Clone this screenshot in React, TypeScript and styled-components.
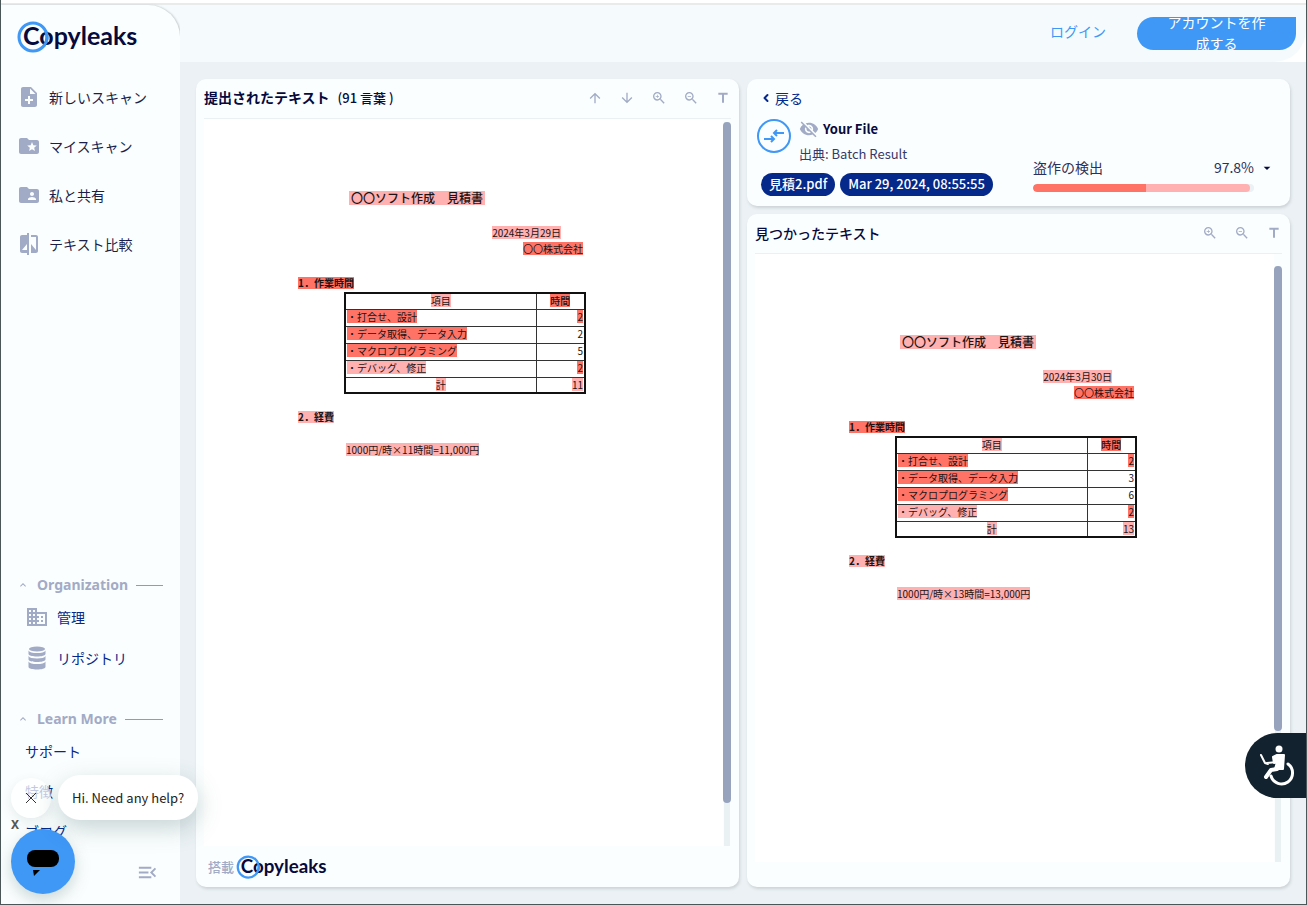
import React from 'react';
import styled, { createGlobalStyle } from 'styled-components';
import {
  MdNoteAdd,
  MdFolderSpecial,
  MdFolderShared,
  MdCompare,
  MdArrowUpward,
  MdArrowDownward,
  MdZoomIn,
  MdZoomOut,
  MdTitle,
  MdOutlineBusiness,
  MdMenuOpen,
  MdVisibilityOff,
  MdKeyboardArrowUp,
  MdArrowDropDown,
} from 'react-icons/md';
import { ChevronLeft } from 'lucide-react';

const color = {
  page: '#ebf1f4',
  panel: '#fbfefe',
  header: '#f5fbfc',
  line: '#e9f1f3',
  icon: '#a2abc6',
  ink: '#1b1f4a',
  title: '#060a3c',
  navy: '#04298a',
  blue: '#3f97f6',
  strong: '#ff7366',
  soft: '#ffb0b0',
};

const Global = createGlobalStyle`
  * { box-sizing: border-box; }
  body {
    margin: 0;
    background: ${color.page};
    color: ${color.ink};
    font: 14px/20px "Noto Sans CJK JP", "Noto Sans", sans-serif;
  }
  button { font: inherit; color: inherit; background: none; border: 0; padding: 0; cursor: pointer; }
  a { color: inherit; text-decoration: none; }
  h1, h2, h3, p { margin: 0; padding: 0; font-size: inherit; }
`;

const Frame = styled.div`
  position: relative;
  display: flex;
  flex-direction: column;
  min-height: 100vh;
  overflow: hidden;
  border: solid #4b5659;
  border-width: 0 1px 1px;
`;

const TopStrip = styled.div`
  height: 5px;
  background: #fff;
  border-bottom: 2px solid #e9ebeb;
`;

const Shell = styled.div`
  flex: 1;
  display: flex;
  background: linear-gradient(${color.header}, ${color.header}) top / 100% 57px no-repeat;
`;

const Sidebar = styled.aside`
  width: 179px;
  flex: none;
  display: flex;
  flex-direction: column;
  padding: 16px 16px 23px;
  background: ${color.panel};
  border-radius: 0 32px 0 0;
  box-shadow: 1px 0 2px #c3c9cc;
`;

const NavItem = styled.a`
  display: flex;
  align-items: center;
  gap: 8px;
  height: 49px;
  svg { width: 24px; height: 24px; color: ${color.icon}; }
`;

const MainNav = styled.nav`
  margin-top: 19px;
`;

const BottomNav = styled.div`
  margin-top: auto;
`;

const Group = styled.nav`
  margin-top: 31px;
`;

const GroupTitle = styled.button`
  display: flex;
  align-items: center;
  gap: 8px;
  width: 100%;
  height: 20px;
  margin-bottom: 2px;
  padding-right: 1px;
  color: ${color.icon};
  font: bold 14px/20px "Noto Sans", sans-serif;
  svg { width: 12px; height: 12px; }
  &::after { content: ''; flex: 1; border-top: 1px solid #8f9bb8; }
`;

const GroupLink = styled.a<{ $plain?: boolean }>`
  display: flex;
  align-items: center;
  gap: 8px;
  height: 40px;
  padding-left: 8px;
  margin-top: ${(p) => (p.$plain ? 0 : 1)}px;
  color: ${color.navy};
  svg { width: 24px; height: 24px; color: ${color.icon}; }
`;

const Collapse = styled.button`
  align-self: flex-end;
  height: 20px;
  margin: 10px 5px 0 0;
  color: ${color.icon};
  svg { width: 23px; height: 23px; display: block; }
`;

const Main = styled.main`
  flex: 1;
  min-width: 0;
  display: flex;
  flex-direction: column;
`;

const HeaderBackdrop = styled.div`
  background: linear-gradient(90deg, transparent 50%, #fff 50%);
`;

const Header = styled.header`
  display: flex;
  align-items: center;
  justify-content: flex-end;
  gap: 31px;
  height: 57px;
  padding-right: 10px;
  background: ${color.header};
  border-radius: 0 0 32px 0;
`;

const Login = styled.a`
  padding-bottom: 5px;
  color: ${color.blue};
`;

const SignUp = styled.button`
  display: flex;
  align-items: center;
  width: 159px;
  height: 33px;
  padding: 0 25px 2px;
  overflow: hidden;
  border-radius: 17px 0 17px 17px;
  background: ${color.blue};
  color: #fff;
  line-height: 21px;
`;

const Content = styled.div`
  flex: 1;
  display: grid;
  grid-template-columns: 1fr 1fr;
  gap: 8px;
  padding: 17px 16px;
  background: ${color.page};
`;

const Column = styled.div`
  display: flex;
  flex-direction: column;
  gap: 8px;
  min-width: 0;
`;

const Panel = styled.section<{ $grow?: boolean; $bottom?: number }>`
  flex: ${(p) => (p.$grow ? 1 : 'none')};
  display: flex;
  flex-direction: column;
  padding: 0 8px ${(p) => p.$bottom ?? 0}px;
  background: ${color.panel};
  border-radius: 10px;
  box-shadow: 1px 2px 3px #cdd3d6;
`;

const PanelHead = styled.header`
  display: flex;
  align-items: center;
  height: 40px;
  padding-bottom: 2px;
  border-bottom: 1px solid ${color.line};
`;

const PanelTitle = styled.h2`
  flex: 1;
  font-weight: 500;
  color: ${color.title};
  b { font-weight: 700; }
`;

const WordCount = styled.span`
  margin-left: 8px;
  font-size: 13px;
`;

const Tools = styled.div`
  display: flex;
  gap: 16px;
  button { width: 16px; height: 16px; color: ${color.icon}; }
  svg { width: 16px; height: 16px; display: block; }
`;

const Viewer = styled.div<{ $gap: number }>`
  flex: 1;
  display: flex;
  padding-top: ${(p) => p.$gap}px;
  background: linear-gradient(#fff, #fff) left / calc(100% - 8px) 100% no-repeat;
`;

const Sheet = styled.article`
  flex: 1;
  padding: 69px 0 0 94px;
  color: #1c1414;
  font-size: 10px;
`;

const Track = styled.div`
  width: 8px;
  background: linear-gradient(${color.line}, ${color.line}) center / 6px 100% no-repeat;
`;

const Thumb = styled.div<{ $size: number }>`
  height: ${(p) => p.$size}%;
  border-radius: 4px;
  background: #97a3bd;
`;

const Page = styled.div`
  width: 288px;
  display: flex;
  flex-direction: column;
  align-items: flex-start;
`;

const Mark = styled.mark<{ $strong?: boolean }>`
  display: inline-block;
  background: ${(p) => (p.$strong ? color.strong : color.soft)};
  color: inherit;
  white-space: nowrap;
  line-height: 13px;
`;

const DocTitle = styled.h1`
  margin: 0 0 21px 51px;
  font-size: 12px;
  font-weight: 500;
  ${Mark} { padding: 0 2px; line-height: 14px; display: block; }
`;

const DocRight = styled.p<{ $inset: number }>`
  align-self: flex-end;
  margin: 0 ${(p) => p.$inset}px 3px 0;
  ${Mark} { display: block; }
`;

const DocHeading = styled.h3<{ $top: number }>`
  margin: ${(p) => p.$top}px 0 3px;
  font-weight: 700;
  ${Mark} { display: block; line-height: 12px; }
`;

const DocTable = styled.table`
  width: 242px;
  margin-left: 46px;
  table-layout: fixed;
  border-collapse: collapse;
  border: 2px solid #111;
  th, td {
    height: 17px;
    padding: 0 1px;
    border: 1px solid #333;
    font-weight: 400;
    line-height: 13px;
    text-align: left;
    vertical-align: top;
  }
  thead th, tfoot td { height: 16px; }
  th, tfoot td:first-child { text-align: center; }
  td:last-child { text-align: right; }
  th:last-child { width: 49px; font-weight: 500; }
  ${Mark} { display: inline-block; vertical-align: top; }
`;

const DocFormula = styled.p`
  margin: 17px 0 0 48px;
  ${Mark} { display: block; }
`;

const Powered = styled.footer`
  display: flex;
  align-items: center;
  gap: 2px;
  height: 41px;
  padding-left: 4px;
  color: ${color.icon};
  font-size: 13px;
  font-weight: 500;
`;

const Back = styled.a`
  display: flex;
  align-items: center;
  gap: 3px;
  height: 20px;
  margin: 9px 0 8px 5px;
  color: ${color.navy};
`;

const ResultRow = styled.div`
  display: flex;
  justify-content: space-between;
  padding-right: 7px;
`;

const Source = styled.div`
  display: flex;
  gap: 8px;
  padding-left: 2px;
`;

const Circle = styled.span`
  display: grid;
  place-items: center;
  width: 34px;
  height: 34px;
  margin-top: 3px;
  border: 2px solid ${color.blue};
  border-radius: 50%;
  svg { width: 24px; height: 20px; }
`;

const SourceInfo = styled.div`
  color: #343a6b;
  font-size: 13px;
  h2 {
    display: flex;
    align-items: center;
    gap: 4px;
    height: 26px;
    margin-bottom: 2px;
    color: ${color.title};
    font-weight: 700;
  }
  svg { width: 20px; height: 20px; color: ${color.icon}; }
`;

const Chips = styled.div`
  display: flex;
  gap: 5px;
  margin: 9px 0 10px 6px;
`;

const Chip = styled.span`
  height: 23px;
  padding: 0 8px;
  border-radius: 12px;
  background: ${color.navy};
  color: #fff;
  font-size: 13px;
  font-weight: 500;
  line-height: 22px;
`;

const Score = styled.div`
  width: 242px;
  margin-top: 41px;
`;

const ScoreLabel = styled.div`
  display: flex;
  align-items: center;
  height: 20px;
  color: #2b305c;
  span { flex: 1; }
  button { width: 21px; height: 20px; color: ${color.title}; }
  svg { width: 16px; height: 16px; display: block; margin: 2px 0 0 5px; }
`;

const Meter = styled.div`
  display: flex;
  height: 8px;
  margin: 7px 21px 0 0;
  border-radius: 4px;
  background: ${color.page};
  overflow: hidden;
`;

const MeterPart = styled.i<{ $strong?: boolean }>`
  width: ${(p) => (p.$strong ? 51 : 47)}%;
  background: ${(p) => (p.$strong ? color.strong : color.soft)};
  border-radius: ${(p) => (p.$strong ? '4px 0 0 4px' : '0 4px 4px 0')};
`;

const ChatDock = styled.div`
  position: absolute;
  left: 10px;
  bottom: 10px;
`;

const ChatRow = styled.div`
  display: flex;
  align-items: center;
  gap: 7px;
`;

const ChatClose = styled.button`
  display: grid;
  place-items: center;
  width: 40px;
  height: 40px;
  border-radius: 50%;
  background: rgba(255, 255, 255, 0.75);
  box-shadow: 0 4px 12px rgba(60, 90, 100, 0.12);
  svg { width: 12px; height: 12px; }
`;

const ChatBubble = styled.button`
  height: 45px;
  padding: 0 14px;
  border-radius: 22px;
  background: #fff;
  color: #222;
  font-size: 13px;
  box-shadow: 0 8px 24px rgba(60, 100, 105, 0.28);
`;

const ChatDismiss = styled.button`
  display: block;
  height: 9px;
  color: #555;
  font: bold 12px/9px "Noto Sans", sans-serif;
`;

const ChatOpen = styled.button`
  display: grid;
  place-items: center;
  width: 64px;
  height: 65px;
  border-radius: 50%;
  background: ${color.blue};
  box-shadow: 0 6px 16px rgba(60, 100, 105, 0.25);
  svg { width: 34px; height: 30px; }
`;

const Accessibility = styled.button`
  position: absolute;
  right: 0;
  bottom: 106px;
  width: 61px;
  height: 65px;
  border-radius: 33px 0 0 33px;
  background: #12222f;
  svg { display: block; width: 36px; height: 44px; margin-left: 14px; }
`;

const LogoSvg = styled.svg`
  display: block;
`;

function Logo({ width, height }: { width: number; height: number }) {
  return (
    <LogoSvg width={width} height={height} viewBox="0 0 122 32" role="img" aria-label="Copyleaks">
      <circle cx="16" cy="16" r="14" fill="none" stroke={color.blue} strokeWidth="3" />
      <text x="6" y="24" fontFamily="Lato, sans-serif" fontWeight="700" fontSize="25" fill={color.title}>
        Copyleaks
      </text>
      <path d="M28.6 10A14 14 0 0 1 27 24.6" fill="none" stroke={color.blue} strokeWidth="3" />
    </LogoSvg>
  );
}

function DatabaseIcon() {
  return (
    <svg viewBox="0 0 24 24" fill="currentColor" aria-hidden="true">
      <ellipse cx="12" cy="3" rx="8" ry="2.5" />
      <path d="M3.500 4.500c1 2 4 2.600 8.500 2.600s7.500-.6 8.500-2.600v3.200c0 1.800-4 2.800-8.500 2.800s-8.500-1-8.500-2.800z" />
      <path d="M3.500 10c1 2 4 2.400 8.500 2.400s7.500-.4 8.500-2.400v3.200c0 1.800-4 2.800-8.500 2.800s-8.500-1-8.500-2.800z" />
      <path d="M3.500 15.500c1 2 4 2.500 8.500 2.500s7.500-.5 8.500-2.500v5.200c0 1.800-4 2.800-8.500 2.800s-8.500-1-8.500-2.800z" />
      <path d="M3.500 19.300c1 1.600 4 2.200 8.500 2.200" fill="none" stroke={color.panel} strokeWidth="0" />
    </svg>
  );
}

type ToolName = 'up' | 'down' | 'in' | 'out' | 'text';
const toolIcons: Record<ToolName, [string, React.ReactNode]> = {
  up: ['前へ', <MdArrowUpward />],
  down: ['次へ', <MdArrowDownward />],
  in: ['拡大', <MdZoomIn />],
  out: ['縮小', <MdZoomOut />],
  text: ['テキスト表示', <MdTitle />],
};

function Toolbar({ items }: { items: ToolName[] }) {
  return (
    <Tools>
      {items.map((name) => (
        <button key={name} aria-label={toolIcons[name][0]}>
          {toolIcons[name][1]}
        </button>
      ))}
    </Tools>
  );
}

interface Quote {
  date: string;
  input: string;
  macro: string;
  total: string;
  cost: string;
}

function QuoteSheet({ quote }: { quote: Quote }) {
  return (
    <Sheet>
      <Page>
        <DocTitle><Mark>〇〇ソフト作成　見積書</Mark></DocTitle>
        <DocRight $inset={25}><Mark>{quote.date}</Mark></DocRight>
        <DocRight $inset={3}><Mark $strong>〇〇株式会社</Mark></DocRight>
        <DocHeading $top={19}><Mark $strong>1．作業時間</Mark></DocHeading>
        <DocTable>
          <thead>
            <tr><th><Mark>項目</Mark></th><th><Mark $strong>時間</Mark></th></tr>
          </thead>
          <tbody>
            <tr><td><Mark $strong>・打合せ、設計</Mark></td><td><Mark $strong>2</Mark></td></tr>
            <tr><td><Mark $strong>・データ取得、データ入力</Mark></td><td>{quote.input}</td></tr>
            <tr><td><Mark $strong>・マクロプログラミング</Mark></td><td>{quote.macro}</td></tr>
            <tr><td><Mark>・デバッグ、修正</Mark></td><td><Mark $strong>2</Mark></td></tr>
          </tbody>
          <tfoot>
            <tr><td><Mark>計</Mark></td><td><Mark>{quote.total}</Mark></td></tr>
          </tfoot>
        </DocTable>
        <DocHeading $top={17}><Mark>2．経費</Mark></DocHeading>
        <DocFormula><Mark>{quote.cost}</Mark></DocFormula>
      </Page>
    </Sheet>
  );
}

const submitted: Quote = { date: '2024年3月29日', input: '2', macro: '5', total: '11', cost: '1000円/時×11時間=11,000円' };
const found: Quote = { date: '2024年3月30日', input: '3', macro: '6', total: '13', cost: '1000円/時×13時間=13,000円' };

function DocumentView({ quote, gap, thumb }: { quote: Quote; gap: number; thumb: number }) {
  return (
    <Viewer $gap={gap}>
      <QuoteSheet quote={quote} />
      <Track><Thumb $size={thumb} /></Track>
    </Viewer>
  );
}

export default function App() {
  return (
    <>
      <Global />
      <Frame>
        <TopStrip />
        <Shell>
          <Sidebar>
            <a href="#home"><Logo width={122} height={32} /></a>
            <MainNav>
              <NavItem href="#new"><MdNoteAdd />新しいスキャン</NavItem>
              <NavItem href="#scans"><MdFolderSpecial />マイスキャン</NavItem>
              <NavItem href="#shared"><MdFolderShared />私と共有</NavItem>
              <NavItem href="#compare"><MdCompare />テキスト比較</NavItem>
            </MainNav>
            <BottomNav>
              <Group>
                <GroupTitle><MdKeyboardArrowUp />Organization</GroupTitle>
                <GroupLink href="#admin"><MdOutlineBusiness />管理</GroupLink>
                <GroupLink href="#repository"><DatabaseIcon />リポジトリ</GroupLink>
              </Group>
              <Group>
                <GroupTitle><MdKeyboardArrowUp />Learn More</GroupTitle>
                <GroupLink $plain href="#support">サポート</GroupLink>
                <GroupLink $plain href="#features">特徴</GroupLink>
                <GroupLink $plain href="#blog">ブログ</GroupLink>
              </Group>
            </BottomNav>
            <Collapse aria-label="メニューを閉じる"><MdMenuOpen /></Collapse>
          </Sidebar>
          <Main>
            <HeaderBackdrop>
              <Header>
                <Login href="#login">ログイン</Login>
                <SignUp><span>アカウントを作成する</span></SignUp>
              </Header>
            </HeaderBackdrop>
            <Content>
              <Column>
                <Panel $grow>
                  <PanelHead>
                    <PanelTitle><b>提出されたテキスト</b><WordCount>(91 言葉 )</WordCount></PanelTitle>
                    <Toolbar items={['up', 'down', 'in', 'out', 'text']} />
                  </PanelHead>
                  <DocumentView quote={submitted} gap={3} thumb={94} />
                  <Powered>搭載<Logo width={92} height={24} /></Powered>
                </Panel>
              </Column>
              <Column>
                <Panel>
                  <Back href="#back"><ChevronLeft size={12} strokeWidth={4} />戻る</Back>
                  <ResultRow>
                    <div>
                      <Source>
                        <Circle>
                          <svg viewBox="0 0 24 20" fill="none" stroke={color.blue} strokeWidth="2">
                            <path d="M22 7H13M15 4l-3 3 3 3M2 13h9M9 10l3 3-3 3" />
                          </svg>
                        </Circle>
                        <SourceInfo>
                          <h2><MdVisibilityOff />Your File</h2>
                          <p>出典: Batch Result</p>
                        </SourceInfo>
                      </Source>
                      <Chips>
                        <Chip>見積2.pdf</Chip>
                        <Chip>Mar 29, 2024, 08:55:55</Chip>
                      </Chips>
                    </div>
                    <Score>
                      <ScoreLabel>
                        <span>盗作の検出</span>97.8%
                        <button aria-label="詳細"><MdArrowDropDown /></button>
                      </ScoreLabel>
                      <Meter><MeterPart $strong /><MeterPart /></Meter>
                    </Score>
                  </ResultRow>
                </Panel>
                <Panel $grow $bottom={25}>
                  <PanelHead>
                    <PanelTitle>見つかったテキスト</PanelTitle>
                    <Toolbar items={['in', 'out', 'text']} />
                  </PanelHead>
                  <DocumentView quote={found} gap={12} thumb={78} />
                </Panel>
              </Column>
            </Content>
          </Main>
        </Shell>
        <ChatDock>
          <ChatRow>
            <ChatClose aria-label="閉じる">
              <svg viewBox="0 0 12 12" stroke="#333" fill="none"><path d="M1 1l10 10M11 1L1 11" /></svg>
            </ChatClose>
            <ChatBubble>Hi. Need any help?</ChatBubble>
          </ChatRow>
          <ChatDismiss>X</ChatDismiss>
          <ChatOpen aria-label="チャットを開く">
            <svg viewBox="0 0 34 30">
              <rect x="1" y="3" width="32" height="17" rx="8" />
              <path d="M7 23h7l-6 6z" />
            </svg>
          </ChatOpen>
        </ChatDock>
        <Accessibility aria-label="アクセシビリティ">
          <svg viewBox="0 0 36 44" fill="none" stroke="#fff" strokeLinecap="round" strokeLinejoin="round">
            <circle cx="20" cy="5" r="3.5" fill="#fff" stroke="none" />
            <path d="M14 13l4-2h7l-1 14h-8l2-7-3 1z" fill="#fff" strokeWidth="2" />
            <path d="M18 25l-6 1-5 7" strokeWidth="4" />
            <path d="M17 18l-9 1M2 11l4 8 3 1" strokeWidth="2" />
            <path d="M29 20a11 11 0 1 1-17 12" strokeWidth="3" />
          </svg>
        </Accessibility>
      </Frame>
    </>
  );
}
